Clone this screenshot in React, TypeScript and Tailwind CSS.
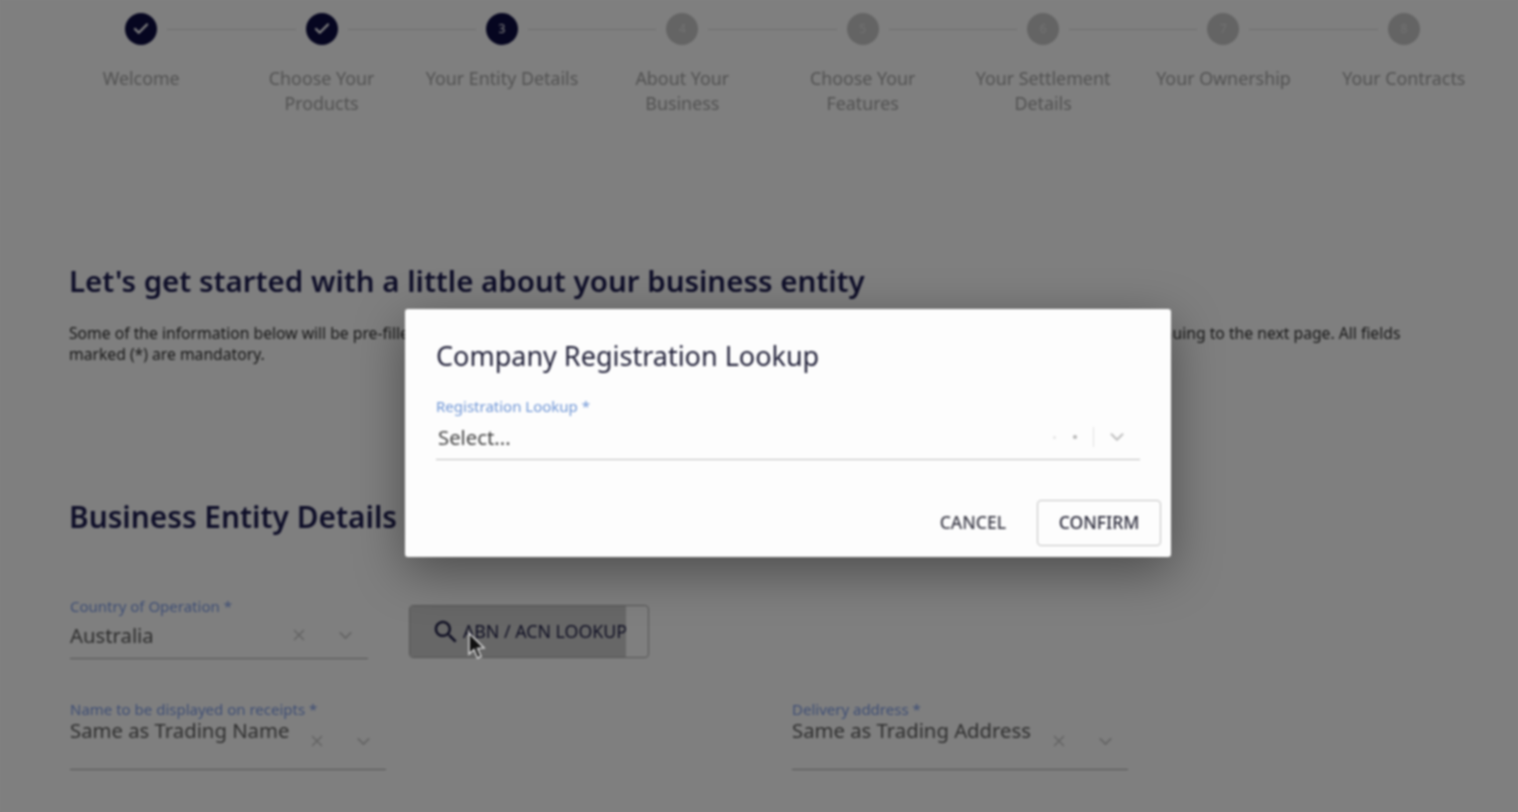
import React from 'react';
import { Check, X, ChevronDown } from 'lucide-react';

const steps = [
  { label: ['Welcome'], state: 'done' },
  { label: ['Choose Your', 'Products'], state: 'done' },
  { label: ['Your Entity Details'], state: 'current' },
  { label: ['About Your', 'Business'], state: 'todo' },
  { label: ['Choose Your', 'Features'], state: 'todo' },
  { label: ['Your Settlement', 'Details'], state: 'todo' },
  { label: ['Your Ownership'], state: 'todo' },
  { label: ['Your Contracts'], state: 'todo' },
];

const Stepper = () => (
  <div className="grid grid-cols-8 w-[1443px] ml-[51px] pt-[13px]">
    {steps.map((step, i) => (
      <div key={i} className="flex flex-col items-center">
        <div className="flex items-center w-full gap-[10px]">
          <div className={`flex-1 h-px ${i === 0 ? 'bg-transparent' : 'bg-[#dcdcdc]'}`} />
          <div
            className={`w-8 h-8 rounded-full flex items-center justify-center text-xs ${
              step.state === 'todo' ? 'bg-[#c8c8c8] text-[#e4e4e4]' : 'bg-[#0c0c40] text-white'
            }`}
          >
            {step.state === 'done' ? <Check size={18} strokeWidth={3} /> : i + 1}
          </div>
          <div className={`flex-1 h-px ${i === 7 ? 'bg-transparent' : 'bg-[#dcdcdc]'}`} />
        </div>
        <div className="mt-[21px] text-[17.85px] leading-[25px] text-[#a4a4a4] text-center whitespace-nowrap">
          {step.label.map((line) => (
            <div key={line}>{line}</div>
          ))}
        </div>
      </div>
    ))}
  </div>
);

const SelectField = ({
  label,
  value,
  className,
  tall,
}: {
  label: string;
  value: string;
  className: string;
  tall?: boolean;
}) => (
  <div className={className}>
    <div className="text-[15px] leading-[18px] text-[#7d9ce8] whitespace-nowrap">{label} *</div>
    <div className={`flex border-b border-[#aaaaaa] ${tall ? 'h-[52px]' : 'h-[44px] pb-[3px] items-center'}`}>
      <div className={`flex-1 text-[20.3px] text-[#5c5c5c] ${tall ? 'leading-[25px]' : 'leading-[38px]'}`}>{value}</div>
      <div className={`flex items-center gap-[27px] pr-[12px] text-[#cacaca] ${tall ? 'h-[46px]' : ''}`}>
        <X size={18} strokeWidth={2.25} />
        <ChevronDown size={21} strokeWidth={2.25} />
      </div>
    </div>
  </div>
);

export default function App() {
  return (
    <div className="h-screen overflow-hidden bg-[#808080]">
      <div className="relative h-full overflow-hidden bg-white font-['Noto_Sans','Open_Sans',sans-serif] blur-[0.8px]">
        <Stepper />

        <div className="pl-[69px]">
          <h1 className="mt-[145px] text-[29.5px] leading-[40px] font-semibold text-[#1c1c50] whitespace-nowrap">
            Let's get started with a little about your business entity
          </h1>
          <p className="mt-[22px] w-[1340px] text-[15.7px] leading-[21px] text-[#303030]">
            Some of the information below will be pre-filled based on the details you have provided to us. Please check them and make any changes before continuing to the next page. All fields marked (*) are mandatory.
          </p>

          <h2 className="mt-[132px] text-[29.8px] leading-[40px] font-semibold text-[#1c1c50]">Business Entity Details</h2>

          <div className="mt-[58px] flex items-start">
            <SelectField label="Country of Operation" value="Australia" className="ml-px w-[298px] mt-[2px]" />
            <button className="relative mt-[10px] ml-[41px] w-[240px] h-[53px] rounded-[4px] border border-[#aaaaaa] flex items-center justify-center gap-[2px] text-[#1c1c44] overflow-hidden">
              <span className="absolute inset-y-0 left-0 w-[216px] bg-[#cfcfcf]" />
              <svg className="relative" width="30" height="30" viewBox="0 0 24 24" fill="currentColor">
                <path d="M15.5 14h-.79l-.28-.27C15.41 12.59 16 11.11 16 9.5 16 5.91 13.09 3 9.5 3S3 5.91 3 9.5 5.91 16 9.5 16c1.61 0 3.09-.59 4.23-1.57l.27.28v.79l5 4.99L20.49 19l-4.99-5zm-6 0C7.01 14 5 11.99 5 9.5S7.01 5 9.5 5 14 7.01 14 9.5 11.99 14 9.5 14z" />
              </svg>
              <span className="relative text-[17.8px] whitespace-nowrap">ABN / ACN LOOKUP</span>
            </button>
          </div>

          <div className="mt-[41px] flex items-start">
            <SelectField label="Name to be displayed on receipts" value="Same as Trading Name" className="ml-px w-[316px]" tall />
            <SelectField label="Delivery address" value="Same as Trading Address" className="ml-[406px] w-[336px]" tall />
          </div>
        </div>

        {/* dimmed backdrop */}
        <div className="absolute inset-0 bg-black/50" />

        {/* lookup modal */}
        <div className="absolute left-[405px] top-[309px] w-[766px] h-[248px] rounded-[3px] bg-[#fdfdfd] px-[31px] shadow-[0_14px_50px_rgba(0,0,0,0.4)]">
          <div className="pt-[29px] text-[27px] leading-[36px] text-[#22223a] whitespace-nowrap">
            Company Registration Lookup
          </div>
          <div className="mt-[23px] text-[15px] leading-[18px] text-[#6f96d6]">Registration Lookup *</div>
          <div className="flex items-center h-[45px] border-b border-[#bcbcbc]">
            <div className="flex-1 pl-[2px] text-[20.3px] text-[#444444]">Select...</div>
            <div className="flex items-center text-[#c0c0c0]">
              <span className="w-[3px] h-[3px] rounded-full bg-[#e4e4e4]" />
              <span className="ml-[17px] w-1 h-1 rounded-full bg-[#b4b4b4]" />
              <span className="ml-[16px] w-px h-5 bg-[#e0e0e0]" />
              <ChevronDown size={22} strokeWidth={2.25} className="ml-[12px] mr-[12px]" />
            </div>
          </div>
          <div className="mt-[40px] mr-[-21px] flex items-center justify-end">
            <button className="pb-[2px] text-[17.5px] font-medium text-[#3c3c48]">CANCEL</button>
            <button className="ml-[31px] w-[124px] h-[46px] pb-[2px] rounded-[4px] border-[1.5px] border-[#c0c0c0] text-[17.5px] font-medium text-[#2c2c3c]">
              CONFIRM
            </button>
          </div>
        </div>

        {/* mouse pointer */}
        <svg className="absolute left-[466px] top-[631px]" width="22" height="32" viewBox="0 0 22 32">
          <path d="M3 2 L3 23 L8 18.5 L11.5 27 L15 25.5 L11.5 17.5 L18 17 Z" fill="#111" stroke="#d8d8d8" strokeWidth="1.5" />
        </svg>
      </div>
    </div>
  );
}
